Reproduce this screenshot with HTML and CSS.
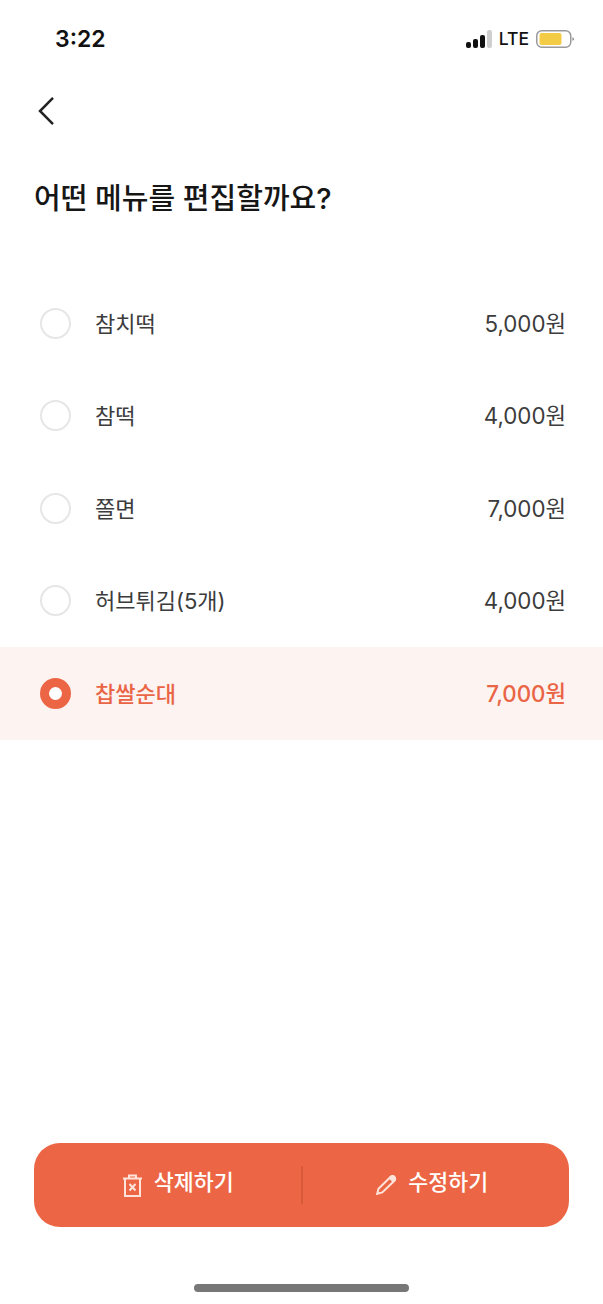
FILE: index.html
```html
<!DOCTYPE html>
<html lang="ko">
<head>
<meta charset="utf-8">
<title>메뉴 편집</title>
<link rel="stylesheet" href="styles.css">
</head>
<body>
<div class="screen">
  <header class="status">
    <span class="time">3:22</span>
    <div class="status-right">
      <div class="signal"><i class="b1"></i><i class="b2"></i><i class="b3"></i><i class="b4"></i></div>
      <span class="lte">LTE</span>
      <svg class="battery" width="38" height="20" viewBox="0 0 38 20">
        <rect x="0.75" y="1.75" width="34" height="16.5" rx="5" fill="none" stroke="#9a9a9a" stroke-width="1.500"/>
        <rect x="3.500" y="4" width="22" height="12" rx="2" fill="#f4cb45"/>
        <path d="M36.500 8.200c.9.2 1.300.9 1.300 1.800s-.4 1.600-1.300 1.800z" fill="#777"/>
      </svg>
    </div>
  </header>
  <nav class="nav">
    <svg width="20" height="30" viewBox="0 0 20 30"><path d="M18 1.800 5 15l13 13.200" fill="none" stroke="#222" stroke-width="2.500"/></svg>
  </nav>
  <h1 class="title">어떤 메뉴를 편집할까요?</h1>
  <ul class="list">
    <li class="row"><span class="radio"></span><span class="name">참치떡</span><span class="price">5,000원</span></li>
    <li class="row"><span class="radio"></span><span class="name">참떡</span><span class="price">4,000원</span></li>
    <li class="row"><span class="radio"></span><span class="name">쫄면</span><span class="price">7,000원</span></li>
    <li class="row"><span class="radio"></span><span class="name">허브튀김(5개)</span><span class="price">4,000원</span></li>
    <li class="row selected"><span class="radio"></span><span class="name">찹쌀순대</span><span class="price">7,000원</span></li>
  </ul>
  <div class="spacer"></div>
  <div class="actions">
    <button class="action action-delete">
      <svg width="19" height="23" viewBox="0 0 19 23" fill="none" stroke="#fde3da" stroke-width="2"><path d="M0 4.500h19M6 4.500V1.500h7v3M2 4.500V22h15V4.500"/><path d="M6.500 10l6 6.500M12.500 10l-6 6.500"/></svg>
      <span class="label">삭제하기</span>
    </button>
    <span class="divider"></span>
    <button class="action action-edit">
      <svg width="21" height="20" viewBox="0 0 21 20" fill="none" stroke="#fde3da" stroke-width="2"><path d="M1.200 18.800l1.300-5L14.500 2c1-1 2.700-1 3.800 0s1.100 2.700.1 3.700L6.300 17.400z"/><path d="M15 1.800c1-.8 2.400-.8 3.300.2s1 2.400.1 3.400l-1.100 1.100-3.500-3.500z" fill="#fde3da"/></svg>
      <span class="label">수정하기</span>
    </button>
  </div>
  <div class="home"></div>
</div>
</body>
</html>
```
FILE: styles.css
```css
* { box-sizing: border-box; margin: 0; padding: 0; }
html, body { height: 100%; }
body {
  background: #fff;
  font-family: Inter, "Noto Sans CJK KR", sans-serif;
  color: #3c3c3c;
}
.screen { height: 1304px; display: flex; flex-direction: column; overflow: hidden; }
.status {
  height: 77px;
  display: flex;
  justify-content: space-between;
  align-items: center;
  padding: 0 29px 0 55px;
}
.time { font-size: 23px; font-weight: 600; color: #111; }
.status-right { display: flex; align-items: center; gap: 7px; }
.signal { display: flex; align-items: flex-end; gap: 2px; height: 18px; }
.signal i { display: block; width: 5px; border-radius: 2px; background: #111; }
.b1 { height: 6px; }
.b2 { height: 9px; }
.b3 { height: 13px; }
.signal .b4 { height: 18px; background: #cfcfcf; }
.lte { font-size: 17.500px; font-weight: 500; color: #111; }
.nav { height: 70px; padding: 0 0 2px 35px; display: flex; align-items: center; }
.title {
  font-size: 29px;
  font-weight: 500;
  line-height: 40px;
  color: #161616;
  padding-left: 34px;
  margin-top: 32px;
}
.list { list-style: none; margin-top: 58px; }
.row {
  height: 92.500px;
  display: flex;
  align-items: center;
  padding: 0 37px 0 40px;
  font-size: 22px;
}
.radio {
  width: 31px;
  height: 31px;
  border-radius: 50%;
  border: 2px solid #e6e6e6;
  background: #fff;
  margin-right: 24px;
}
.name { flex: 1; padding-bottom: 3px; }
.price { font-size: 22.300px; padding-bottom: 3px; }
.selected { background: #fdf3f1; color: #e96545; font-weight: 500; }
.selected .radio { border: 9px solid #ec6645; }
.spacer { flex: 1; }
.actions {
  height: 84px;
  margin: 0 34px;
  border-radius: 26px;
  background: #ec6645;
  display: grid;
  grid-template-columns: 1fr 2px 1fr;
  align-items: center;
}
.action {
  height: 84px;
  border: 0;
  background: none;
  color: #fff;
  font-family: inherit;
  font-size: 21.700px;
  font-weight: 500;
  display: flex;
  align-items: center;
  justify-content: center;
  gap: 11px;
}
.action-delete { padding-left: 22px; gap: 12px; }
.action-edit { padding-right: 7px; }
.label { padding-bottom: 9px; }
.divider { height: 38px; background: #d8583a; }
.home {
  width: 215px;
  height: 8px;
  border-radius: 4px;
  background: #777;
  margin: 57px auto 12px;
}
```
